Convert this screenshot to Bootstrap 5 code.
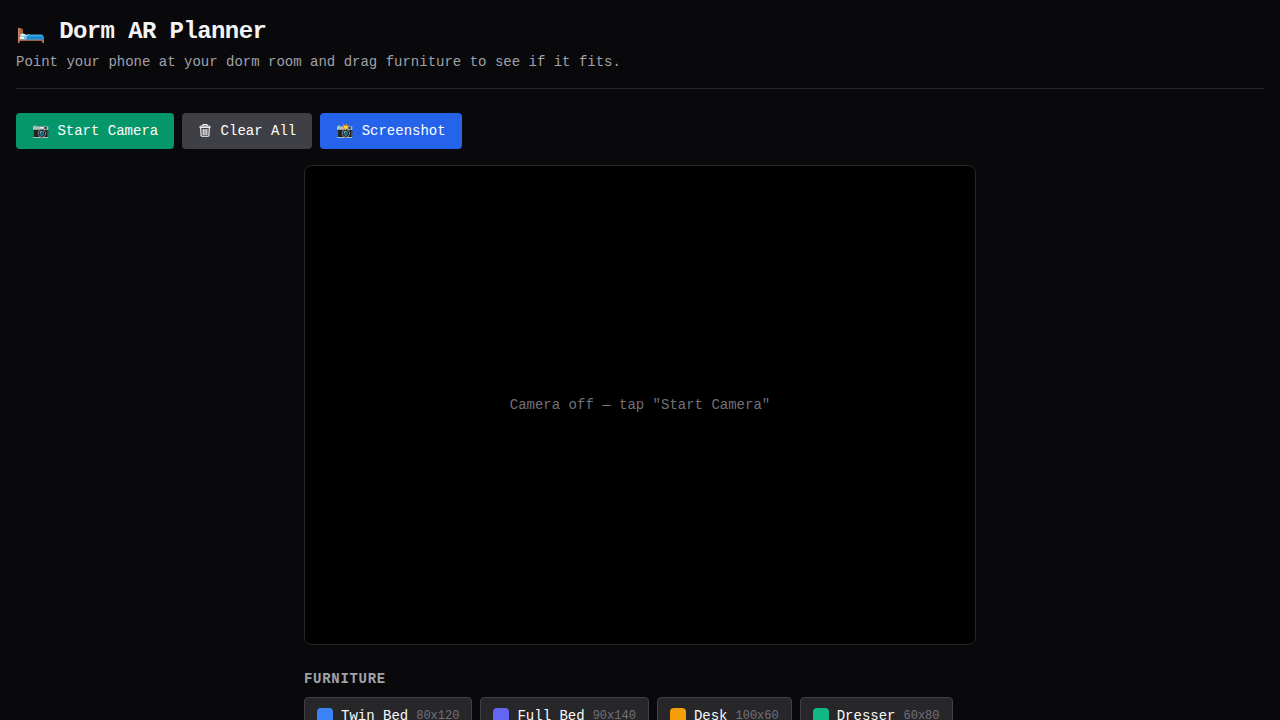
<!DOCTYPE html>
<html lang="en">
<head>
<meta charset="utf-8">
<meta name="viewport" content="width=device-width, initial-scale=1">
<title>Dorm AR Planner</title>
<link href="https://cdn.jsdelivr.net/npm/bootstrap@5.3.0/dist/css/bootstrap.min.css" rel="stylesheet">
<style>
body{background:#09090b;color:#f4f4f5;font-family:"Liberation Mono",monospace;height:720px;overflow:hidden}
.planner{padding:16px}
.page-head{border-bottom:1px solid #27272a;padding-bottom:16px;margin-bottom:24px}
.page-head h1{font-size:24px;line-height:32px;font-weight:700;letter-spacing:-.6px;margin-bottom:4px}
.page-head p{font-size:14px;line-height:20px;color:#a1a1aa}
.tool{font-size:14px;line-height:20px;padding:8px 16px;border:0;border-radius:4px;color:#fff}
.tool-start{background:#059669}.tool-clear{background:#3f3f46}.tool-shot{background:#2563eb}
.tool:hover{color:#fff;filter:brightness(1.1)}
.trash{width:14px;height:14px;vertical-align:-3px}
.stage{width:672px}
.viewport{height:480px;background:#000;border:1px solid #27272a;border-radius:8px;color:#71717a;font-size:14px;line-height:20px}
.stage h2{font-size:14px;line-height:20px;font-weight:700;letter-spacing:.7px;color:#a1a1aa;margin:24px 0 8px}
.piece{background:#27272a;border:1px solid #3f3f46;border-radius:4px;padding:8px 12px;color:#fafafa;font-size:14px;line-height:20px}
.swatch{width:16px;height:16px;border-radius:4px}
.dims{font-size:12px;line-height:16px;color:#71717a}
</style>
</head>
<body>
<main class="planner">
<header class="page-head"><h1>🛏️ Dorm AR Planner</h1><p class="mb-0">Point your phone at your dorm room and drag furniture to see if it fits.</p></header>
<div class="d-flex gap-2 mb-3">
<button class="btn tool tool-start">📷 Start Camera</button>
<button class="btn tool tool-clear"><svg class="trash" viewBox="0 0 14 14" fill="none" stroke="currentColor" aria-hidden="true"><path d="M5 2V1Q5 .5 5.5 .5H8.5Q9 .5 9 1V2M2.7 4L3.1 11.6Q3.1 12.2 3.8 12.2H10.2Q10.9 12.2 10.9 11.6L11.3 4M5.2 5V11M7 5V11M8.8 5V11" stroke-width="1.1"/><path d="M1.8 3.4V2.7Q1.8 2.1 2.5 2.1H11.5Q12.2 2.1 12.2 2.7V3.4Z"/></svg> Clear All</button>
<button class="btn tool tool-shot">📸 Screenshot</button>
</div>
<section class="stage mx-auto">
<div class="viewport d-flex align-items-center justify-content-center">Camera off — tap "Start Camera"</div>
<h2 class="text-uppercase">Furniture</h2>
<div class="d-flex flex-wrap gap-2">
<button class="piece d-flex align-items-center gap-2"><span class="swatch" style="background:#3b82f6"></span>Twin Bed<span class="dims">80x120</span></button>
<button class="piece d-flex align-items-center gap-2"><span class="swatch" style="background:#6366f1"></span>Full Bed<span class="dims">90x140</span></button>
<button class="piece d-flex align-items-center gap-2"><span class="swatch" style="background:#f59e0b"></span>Desk<span class="dims">100x60</span></button>
<button class="piece d-flex align-items-center gap-2"><span class="swatch" style="background:#10b981"></span>Dresser<span class="dims">60x80</span></button>
</div>
</section>
</main>
<script src="https://cdn.jsdelivr.net/npm/bootstrap@5.3.0/dist/js/bootstrap.bundle.min.js"></script>
</body>
</html>
